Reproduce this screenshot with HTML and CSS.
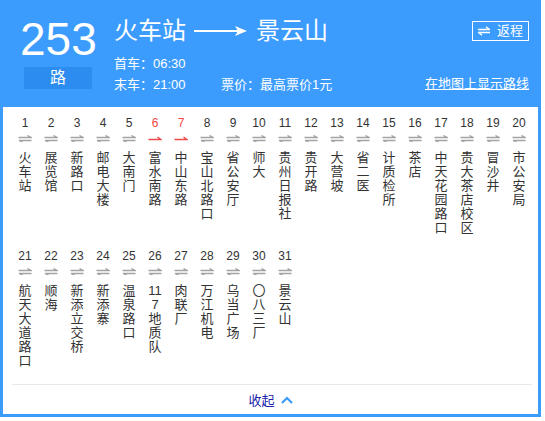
FILE: index.html
```html
<!DOCTYPE html>
<html lang="zh-CN">
<head>
<meta charset="utf-8">
<title>253路</title>
<link rel="stylesheet" href="styles.css">
</head>
<body>
<div class="card">
  <div class="header">
    <div class="line-no">
      <div class="num">253</div>
      <div class="lu">路</div>
    </div>
    <div class="info">
      <div class="title-row">
        <div class="title">
          <span>火车站</span>
          <svg class="long-arrow" width="53" height="12" viewBox="0 0 53 12"><line x1="0" y1="6" x2="47" y2="6" stroke="#fff" stroke-width="2"/><polygon points="41,1 53,6 41,11 44,6" fill="#fff"/></svg>
          <span>景云山</span>
        </div>
        <div class="return-btn">
          <svg width="12" height="10" viewBox="0 0 12 10"><path d="M0 3.5H11.5L8 0.8M12 6.5H0.5L4 9.2" fill="none" stroke="#fff" stroke-width="1.4"/></svg>
          <span>返程</span>
        </div>
      </div>
      <div class="meta-row"><span class="time">首车<span class="colon">：</span>06:30</span></div>
      <div class="meta-row">
        <span class="time">末车<span class="colon">：</span>21:00</span>
        <span>票价<span class="colon">：</span>最高票价1元</span>
        <span class="map-link">在地图上显示路线</span>
      </div>
    </div>
  </div>

  <div class="stations">
    <div class="st"><span class="no">1</span><svg class="ar" viewBox="0 0 14 7"><path d="M0.5 2.5H13L9.5 0.5M13.5 5.5H1L4.5 7" fill="none" stroke="#a3a3a3" stroke-width="1.3"/></svg><span class="nm">火车站</span></div>
    <div class="st"><span class="no">2</span><svg class="ar" viewBox="0 0 14 7"><path d="M0.5 2.5H13L9.5 0.5M13.5 5.5H1L4.5 7" fill="none" stroke="#a3a3a3" stroke-width="1.3"/></svg><span class="nm">展览馆</span></div>
    <div class="st"><span class="no">3</span><svg class="ar" viewBox="0 0 14 7"><path d="M0.5 2.5H13L9.5 0.5M13.5 5.5H1L4.5 7" fill="none" stroke="#a3a3a3" stroke-width="1.3"/></svg><span class="nm">新路口</span></div>
    <div class="st"><span class="no">4</span><svg class="ar" viewBox="0 0 14 7"><path d="M0.5 2.5H13L9.5 0.5M13.5 5.5H1L4.5 7" fill="none" stroke="#a3a3a3" stroke-width="1.3"/></svg><span class="nm">邮电大楼</span></div>
    <div class="st"><span class="no">5</span><svg class="ar" viewBox="0 0 14 7"><path d="M0.5 2.5H13L9.5 0.5M13.5 5.5H1L4.5 7" fill="none" stroke="#a3a3a3" stroke-width="1.3"/></svg><span class="nm">大南门</span></div>
    <div class="st one-way"><span class="no">6</span><svg class="ar" viewBox="0 0 14 7"><path d="M0.5 4.5H13L9.5 2" fill="none" stroke="#f24848" stroke-width="1.3"/></svg><span class="nm">富水南路</span></div>
    <div class="st one-way"><span class="no">7</span><svg class="ar" viewBox="0 0 14 7"><path d="M0.5 4.5H13L9.5 2" fill="none" stroke="#f24848" stroke-width="1.3"/></svg><span class="nm">中山东路</span></div>
    <div class="st"><span class="no">8</span><svg class="ar" viewBox="0 0 14 7"><path d="M0.5 2.5H13L9.5 0.5M13.5 5.5H1L4.5 7" fill="none" stroke="#a3a3a3" stroke-width="1.3"/></svg><span class="nm">宝山北路口</span></div>
    <div class="st"><span class="no">9</span><svg class="ar" viewBox="0 0 14 7"><path d="M0.5 2.5H13L9.5 0.5M13.5 5.5H1L4.5 7" fill="none" stroke="#a3a3a3" stroke-width="1.3"/></svg><span class="nm">省公安厅</span></div>
    <div class="st"><span class="no">10</span><svg class="ar" viewBox="0 0 14 7"><path d="M0.5 2.5H13L9.5 0.5M13.5 5.5H1L4.5 7" fill="none" stroke="#a3a3a3" stroke-width="1.3"/></svg><span class="nm">师大</span></div>
    <div class="st"><span class="no">11</span><svg class="ar" viewBox="0 0 14 7"><path d="M0.5 2.5H13L9.5 0.5M13.5 5.5H1L4.5 7" fill="none" stroke="#a3a3a3" stroke-width="1.3"/></svg><span class="nm">贵州日报社</span></div>
    <div class="st"><span class="no">12</span><svg class="ar" viewBox="0 0 14 7"><path d="M0.5 2.5H13L9.5 0.5M13.5 5.5H1L4.5 7" fill="none" stroke="#a3a3a3" stroke-width="1.3"/></svg><span class="nm">贵开路</span></div>
    <div class="st"><span class="no">13</span><svg class="ar" viewBox="0 0 14 7"><path d="M0.5 2.5H13L9.5 0.5M13.5 5.5H1L4.5 7" fill="none" stroke="#a3a3a3" stroke-width="1.3"/></svg><span class="nm">大营坡</span></div>
    <div class="st"><span class="no">14</span><svg class="ar" viewBox="0 0 14 7"><path d="M0.5 2.5H13L9.5 0.5M13.5 5.5H1L4.5 7" fill="none" stroke="#a3a3a3" stroke-width="1.3"/></svg><span class="nm">省二医</span></div>
    <div class="st"><span class="no">15</span><svg class="ar" viewBox="0 0 14 7"><path d="M0.5 2.5H13L9.5 0.5M13.5 5.5H1L4.5 7" fill="none" stroke="#a3a3a3" stroke-width="1.3"/></svg><span class="nm">计质检所</span></div>
    <div class="st"><span class="no">16</span><svg class="ar" viewBox="0 0 14 7"><path d="M0.5 2.5H13L9.5 0.5M13.5 5.5H1L4.5 7" fill="none" stroke="#a3a3a3" stroke-width="1.3"/></svg><span class="nm">茶店</span></div>
    <div class="st"><span class="no">17</span><svg class="ar" viewBox="0 0 14 7"><path d="M0.5 2.5H13L9.5 0.5M13.5 5.5H1L4.5 7" fill="none" stroke="#a3a3a3" stroke-width="1.3"/></svg><span class="nm">中天花园路口</span></div>
    <div class="st"><span class="no">18</span><svg class="ar" viewBox="0 0 14 7"><path d="M0.5 2.5H13L9.5 0.5M13.5 5.5H1L4.5 7" fill="none" stroke="#a3a3a3" stroke-width="1.3"/></svg><span class="nm">贵大茶店校区</span></div>
    <div class="st"><span class="no">19</span><svg class="ar" viewBox="0 0 14 7"><path d="M0.5 2.5H13L9.5 0.5M13.5 5.5H1L4.5 7" fill="none" stroke="#a3a3a3" stroke-width="1.3"/></svg><span class="nm">冒沙井</span></div>
    <div class="st"><span class="no">20</span><svg class="ar" viewBox="0 0 14 7"><path d="M0.5 2.5H13L9.5 0.5M13.5 5.5H1L4.5 7" fill="none" stroke="#a3a3a3" stroke-width="1.3"/></svg><span class="nm">市公安局</span></div>
    <div class="st"><span class="no">21</span><svg class="ar" viewBox="0 0 14 7"><path d="M0.5 2.5H13L9.5 0.5M13.5 5.5H1L4.5 7" fill="none" stroke="#a3a3a3" stroke-width="1.3"/></svg><span class="nm">航天大道路口</span></div>
    <div class="st"><span class="no">22</span><svg class="ar" viewBox="0 0 14 7"><path d="M0.5 2.5H13L9.5 0.5M13.5 5.5H1L4.5 7" fill="none" stroke="#a3a3a3" stroke-width="1.3"/></svg><span class="nm">顺海</span></div>
    <div class="st"><span class="no">23</span><svg class="ar" viewBox="0 0 14 7"><path d="M0.5 2.5H13L9.5 0.5M13.5 5.5H1L4.5 7" fill="none" stroke="#a3a3a3" stroke-width="1.3"/></svg><span class="nm">新添立交桥</span></div>
    <div class="st"><span class="no">24</span><svg class="ar" viewBox="0 0 14 7"><path d="M0.5 2.5H13L9.5 0.5M13.5 5.5H1L4.5 7" fill="none" stroke="#a3a3a3" stroke-width="1.3"/></svg><span class="nm">新添寨</span></div>
    <div class="st"><span class="no">25</span><svg class="ar" viewBox="0 0 14 7"><path d="M0.5 2.5H13L9.5 0.5M13.5 5.5H1L4.5 7" fill="none" stroke="#a3a3a3" stroke-width="1.3"/></svg><span class="nm">温泉路口</span></div>
    <div class="st"><span class="no">26</span><svg class="ar" viewBox="0 0 14 7"><path d="M0.5 2.5H13L9.5 0.5M13.5 5.5H1L4.5 7" fill="none" stroke="#a3a3a3" stroke-width="1.3"/></svg><span class="nm">117地质队</span></div>
    <div class="st"><span class="no">27</span><svg class="ar" viewBox="0 0 14 7"><path d="M0.5 2.5H13L9.5 0.5M13.5 5.5H1L4.5 7" fill="none" stroke="#a3a3a3" stroke-width="1.3"/></svg><span class="nm">肉联厂</span></div>
    <div class="st"><span class="no">28</span><svg class="ar" viewBox="0 0 14 7"><path d="M0.5 2.5H13L9.5 0.5M13.5 5.5H1L4.5 7" fill="none" stroke="#a3a3a3" stroke-width="1.3"/></svg><span class="nm">万江机电</span></div>
    <div class="st"><span class="no">29</span><svg class="ar" viewBox="0 0 14 7"><path d="M0.5 2.5H13L9.5 0.5M13.5 5.5H1L4.5 7" fill="none" stroke="#a3a3a3" stroke-width="1.3"/></svg><span class="nm">乌当广场</span></div>
    <div class="st"><span class="no">30</span><svg class="ar" viewBox="0 0 14 7"><path d="M0.5 2.5H13L9.5 0.5M13.5 5.5H1L4.5 7" fill="none" stroke="#a3a3a3" stroke-width="1.3"/></svg><span class="nm">〇八三厂</span></div>
    <div class="st"><span class="no">31</span><svg class="ar" viewBox="0 0 14 7"><path d="M0.5 2.5H13L9.5 0.5M13.5 5.5H1L4.5 7" fill="none" stroke="#a3a3a3" stroke-width="1.3"/></svg><span class="nm">景云山</span></div>
  </div>

  <div class="footer">
    <span>收起</span>
    <svg width="12" height="8" viewBox="0 0 12 8"><path d="M1 7L6 2L11 7" fill="none" stroke="#3c9cfe" stroke-width="2.2"/></svg>
  </div>
</div>
</body>
</html>
```

FILE: styles.css
```css
body {
  margin: 0;
  font-family: "Liberation Sans", "Noto Sans CJK SC", sans-serif;
  background: #fff;
}

.card {
  width: 535px;
  border: 3px solid #3c9cfe;
  background: #fff;
}

.header {
  background: #3c9cfe;
  height: 104px;
  box-sizing: border-box;
  padding: 10px 9px 0 17px;
  display: flex;
  color: #fff;
}

.line-no {
  width: 76px;
  flex: none;
}

.num {
  font-size: 46px;
  line-height: 52px;
  text-align: center;
}

.lu {
  width: 68px;
  height: 22px;
  margin: 2px auto 0;
  background: #2d8cf0;
  font-size: 16px;
  line-height: 22px;
  text-align: center;
}

.info {
  flex: 1;
  margin-left: 18px;
  padding-top: 5px;
}

.title-row {
  display: flex;
  justify-content: space-between;
  align-items: flex-start;
}

.title {
  display: flex;
  align-items: center;
  font-size: 24px;
  line-height: 26px;
}

.long-arrow {
  margin: 0 9px 0 8px;
}

.return-btn {
  margin-top: 3px;
  height: 20px;
  box-sizing: border-box;
  border: 1px solid #fff;
  padding: 0 5px;
  display: flex;
  align-items: center;
  gap: 7px;
  font-size: 13px;
  line-height: 18px;
}

.meta-row {
  display: flex;
  font-size: 13px;
  line-height: 20px;
}

.title-row + .meta-row {
  margin-top: 9px;
}

.colon {
  font-family: "Noto Sans CJK TC", "Noto Sans CJK SC", sans-serif;
}

.time {
  min-width: 107px;
}

.map-link {
  margin-left: auto;
  text-decoration: underline;
}

.stations {
  margin: 0 6px 0 9px;
  padding: 8px 0 16px;
  border-bottom: 1px solid #e8e8e8;
  display: flex;
  flex-wrap: wrap;
  align-items: flex-start;
  row-gap: 13px;
}

.st {
  width: 26px;
  display: flex;
  flex-direction: column;
  align-items: center;
  color: #333;
}

.no {
  font-size: 12px;
  line-height: 16px;
}

.one-way .no {
  color: #f24848;
}

.ar {
  display: block;
  margin-top: 4px;
  width: 14px;
  height: 7px;
}

.nm {
  margin-top: 9px;
  width: 16px;
  font-size: 13px;
  line-height: 14px;
  text-align: center;
  word-break: break-all;
}

.footer {
  height: 29px;
  display: flex;
  justify-content: center;
  align-items: center;
  gap: 6px;
  font-size: 13px;
  color: #1a25aa;
}
```
